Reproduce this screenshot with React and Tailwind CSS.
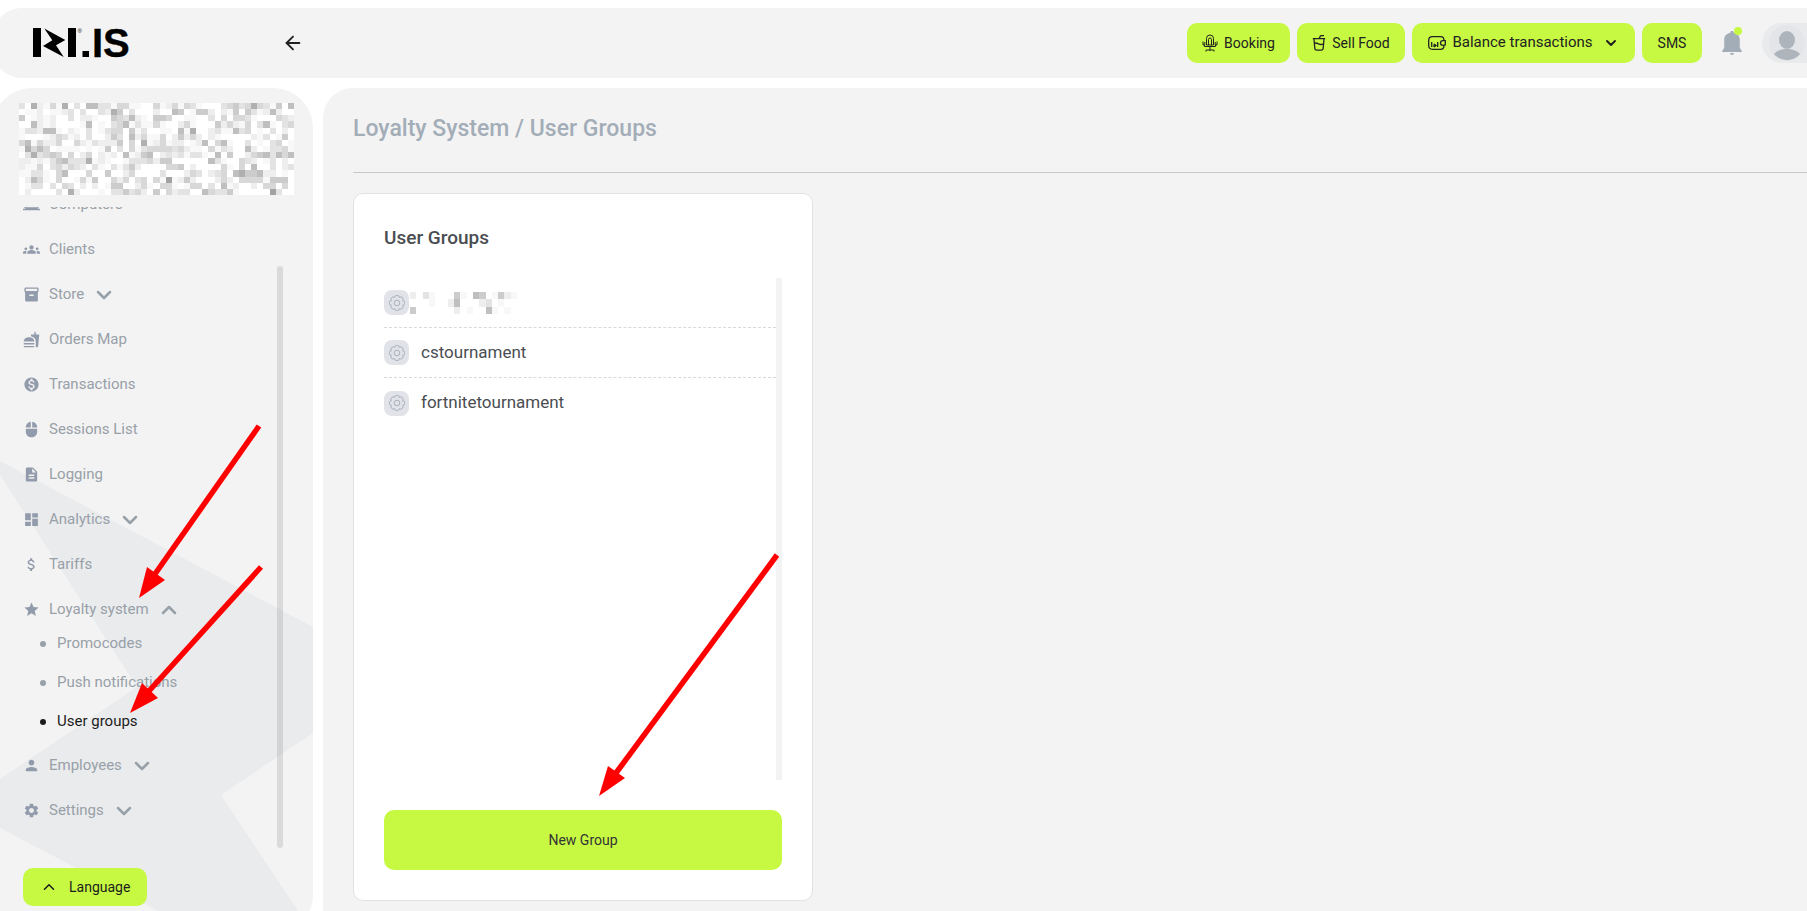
import React from 'react'
import { ArrowLeft, ChevronDown, ChevronUp } from 'lucide-react'
import {
  MdGroups,
  MdInventory2,
  MdFastfood,
  MdMonetizationOn,
  MdMouse,
  MdDescription,
  MdDashboard,
  MdAttachMoney,
  MdStar,
  MdPerson,
  MdSettings,
  MdComputer,
} from 'react-icons/md'

const SHADES = ['#ffffff', '#f8f8f8', '#eeeeee', '#e3e3e3', '#d8d8d8', '#cccccc', '#bfbfbf', '#b0b0b0', '#a2a2a2']

const CLUB_MOSAIC = [
  '307214170306633144110041241431000345347431506',
  '011201123030032750300020065015520215053126200',
  '501212003022100543621055400110030404431000432',
  '006212000016010346131141002410005242140361034',
  '133266102103013440513001106170023116340103020',
  '100012431203002530624114025242021000002130150',
  '461422400421322250407124122012604610030103401',
  '174640111101015030413444434211041320062013341',
  '037345404024021206125602323133106050024563646',
  '221213563337121001333425500000063100432013020',
  '211403424320310313520000445020000410406003023',
  '113310460004005002400003000243023406755622010',
  '026410400141500424034041812520002420444415550',
  '013303043020201550024104410144030612002044040',
  '020000307200010335342050423300643351000008300',
]

const NAME_MOSAIC = ['20310005106501521', '00010026000230100', '50000002010061010']

const NAV = [
  { label: 'Computers', icon: MdComputer },
  { label: 'Clients', icon: MdGroups },
  { label: 'Store', icon: MdInventory2, chevron: 'down' },
  { label: 'Orders Map', icon: MdFastfood },
  { label: 'Transactions', icon: MdMonetizationOn },
  { label: 'Sessions List', icon: MdMouse },
  { label: 'Logging', icon: MdDescription },
  { label: 'Analytics', icon: MdDashboard, chevron: 'down' },
  { label: 'Tariffs', icon: MdAttachMoney },
  {
    label: 'Loyalty system',
    icon: MdStar,
    chevron: 'up',
    children: ['Promocodes', 'Push notifications', 'User groups'],
  },
  { label: 'Employees', icon: MdPerson, chevron: 'down' },
  { label: 'Settings', icon: MdSettings, chevron: 'down' },
]

const ARROWS = [
  { from: [259, 426], to: [155, 574], head: '139,598 147,567 165,580' },
  { from: [261, 567], to: [149, 691], head: '130,713 142,683 158,698' },
  { from: [777, 555], to: [616, 773], head: '599,796 608,766 625,778' },
]

function Mosaic({ rows, className }) {
  return (
    <svg
      className={className}
      viewBox={`0 0 ${rows[0].length} ${rows.length}`}
      preserveAspectRatio="none"
      shapeRendering="crispEdges"
      aria-hidden="true"
    >
      {rows.map((row, y) =>
        row.split('').map((c, x) => (
          <rect key={`${x}-${y}`} x={x} y={y} width="1" height="1" fill={SHADES[c]} />
        ))
      )}
    </svg>
  )
}

function Logo() {
  return (
    <svg className="w-[108px] h-12" viewBox="32 19 108 48" role="img" aria-label="IZI.IS">
      <rect x="33" y="28" width="8" height="29" />
      <polygon points="44.3,28.5 65.3,40 56,45.3 63.7,57 43,46 52.3,40.3" />
      <rect x="68" y="28" width="8" height="29" />
      <rect x="82.5" y="51" width="6.5" height="6" />
      <text x="77.5" y="33" fontSize="6" fontFamily="Liberation Sans, sans-serif">®</text>
      <text x="92" y="57" fontSize="40" fontWeight="700" stroke="#000000" strokeWidth="0.4" fontFamily="Liberation Sans, sans-serif">IS</text>
    </svg>
  )
}

function MicIcon() {
  return (
    <svg className="w-4 h-[18px]" viewBox="0 0 16 18" fill="none" stroke="currentColor" strokeWidth="1">
      <path d="M4.500 11V4.500a3.500 3.500 0 0 1 7 0V11z" />
      <path d="M6.500 11V5.500a1.500 1.500 0 0 1 3 0V11" />
      <path d="M1 7.500v3.500h1.500v1.500h11V11H15V7.500M2.800 8v3M13.200 8v3M8 12.500V17M4 17.500v-1.500h8v1.500" />
    </svg>
  )
}

function CupIcon() {
  return (
    <svg className="w-[14px] h-4" viewBox="0 0 14 16" fill="none" stroke="currentColor" strokeWidth="1.3">
      <path d="M.8 3.7h12.4M2 4l.8 9.4a2 2 0 0 0 2 1.8h4.4a2 2 0 0 0 2-1.8L12 4M2.5 8.3c2-1 3 .2 4.5.8s3 .5 4.6-.4M7.3 3.5 8 1.6q.3-.9 1.3-.9H12" />
    </svg>
  )
}

function WalletIcon() {
  return (
    <svg className="w-[18px] h-[14px]" viewBox="0 0 18 14" fill="none" stroke="currentColor" strokeWidth="1.3">
      <path d="M16 4.5c0-2.5-1-3.8-3.5-3.8h-8C2 .7.7 2 .7 4.3v5.4C.7 12 2 13.3 4.5 13.3h8c2.500 0 3.500-1.300 3.500-3.600" />
      <path d="M17.300 4.700h-2.500a2.200 2.200 0 0 0 0 4.600l2.500-.3z" />
      <path d="M3.700 6v5M6 8.500V11M6 8l2 1.500L6 11M9.700 6v5" />
    </svg>
  )
}

// outline of a gear with eight round teeth
function gearPath() {
  const pts = Array.from({ length: 8 }, (_, i) => {
    const a = (Math.PI / 4) * i + Math.PI / 8
    return `${(8 + 6 * Math.cos(a)).toFixed(2)} ${(8 + 6 * Math.sin(a)).toFixed(2)}`
  })
  return `M${pts[7]}` + pts.map((p) => `A2.3 2.3 0 0 1 ${p}`).join('') + 'Z'
}

function GearIcon() {
  return (
    <svg className="w-4 h-4" viewBox="0 0 16 16" fill="none" stroke="currentColor" strokeWidth="1">
      <path d={gearPath()} />
      <circle cx="8" cy="8" r="2.8" />
    </svg>
  )
}

function BellButton() {
  return (
    <button aria-label="Notifications" className="relative ml-5 text-[#a3adb8]">
      <svg className="w-5 h-6" viewBox="0 0 20 24" fill="currentColor">
        <path d="M10 0c1.200 0 1.800.7 1.800 1.700 3.900.8 6 3.500 6 7v8.100L19.800 20v1H.2v-1l2-3.200V8.700c0-3.500 2.100-6.200 6-7C8.200.7 8.800 0 10 0zM8 22h4c0 1.300-.9 2-2 2s-2-.7-2-2z" />
      </svg>
      <span className="absolute -top-1 right-0 w-2 h-2 rounded-full bg-[#c7f943]" />
    </button>
  )
}

function Header() {
  return (
    <header className="-ml-2 h-[70px] shrink-0 bg-[#f3f3f3] rounded-l-[30px] flex items-center pl-10 overflow-hidden">
      <div className="w-[250px] shrink-0 flex items-center">
        <Logo />
      </div>
      <button aria-label="Collapse menu" className="text-[#222222]">
        <ArrowLeft className="w-[22px] h-[22px]" />
      </button>
      <div className="ml-auto flex items-center gap-[7px] text-sm text-[#222222]">
        <button className="w-[103px] h-10 rounded-[10px] bg-[#c7f943] flex items-center justify-center gap-1.5">
          <MicIcon />
          Booking
        </button>
        <button className="w-[108px] h-10 rounded-[10px] bg-[#c7f943] flex items-center justify-center gap-1.5">
          <CupIcon />
          Sell Food
        </button>
        <button className="w-[223px] h-10 rounded-[10px] bg-[#c7f943] flex items-center justify-center gap-1.5 text-[15px]">
          <WalletIcon />
          Balance transactions
          <ChevronDown className="w-4 h-4 ml-1" strokeWidth={3} />
        </button>
        <button className="w-[60px] h-10 rounded-[10px] bg-[#c7f943]">SMS</button>
      </div>
      <BellButton />
      <button aria-label="Profile" className="ml-5 w-[45px] h-10 shrink-0 rounded-l-full bg-[#e8eaec] flex items-center pl-[7px]">
        <svg className="w-9 h-9" viewBox="0 0 36 36" fill="#adb4bb">
          <circle cx="18" cy="18" r="18" fill="#e3e5e8" />
          <ellipse cx="18" cy="15" rx="8" ry="9" />
          <path d="M5 29c3-3.500 8-5 13-5s10 1.500 13 5c-3 3.800-8 6-13 6s-10-2.200-13-6z" />
        </svg>
      </button>
    </header>
  )
}

function NavItem({ item }) {
  const Icon = item.icon
  const Chevron = item.chevron === 'up' ? ChevronUp : ChevronDown
  return (
    <li>
      <a href="#" className="h-[45px] flex items-center">
        <Icon className="w-[17px] h-[17px] mr-[9px] text-[#929bab]" />
        {item.label}
        {item.chevron && <Chevron className="w-6 h-6 ml-2" strokeWidth={2.5} />}
      </a>
      {item.children && (
        <ul className="-mt-2 mb-0.5 pl-[17px]">
          {item.children.map((label) => (
            <li key={label}>
              <a
                href="#"
                className={
                  label === 'User groups'
                    ? 'h-[39px] flex items-center gap-[11px] text-[#1c1c1c]'
                    : 'h-[39px] flex items-center gap-[11px]'
                }
              >
                <span className="w-1.5 h-1.5 rounded-full bg-current" />
                {label}
              </a>
            </li>
          ))}
        </ul>
      )}
    </li>
  )
}

function Sidebar() {
  return (
    <aside className="relative -ml-2 -mb-6 w-[321px] shrink-0 bg-[#f3f3f3] rounded-[40px] overflow-hidden pt-[15px] pl-[27px] pr-5">
      <svg className="absolute top-0 left-2 w-[313px] h-[847px]" viewBox="0 88 313 847" fill="#e9ebed" aria-hidden="true">
        <polygon points="-10,456 0,461 313,627 313,733 221,795 314,935 204,935 0,828 -10,823 -10,786 0,779 137,687 0,475" />
      </svg>
      <div className="relative">
        <Mosaic rows={CLUB_MOSAIC} className="block w-[275px] h-[92px]" />
        <div className="mt-3 ml-1 mr-2.5 h-[641px] flex justify-between overflow-hidden">
          <nav className="-mt-[25px] text-[15px] text-[#98a0a8]">
            <ul>
              {NAV.map((item) => (
                <NavItem key={item.label} item={item} />
              ))}
            </ul>
          </nav>
          <div className="mt-[59px] w-1.5 rounded-full bg-black/10" />
        </div>
        <button className="mt-5 ml-1 w-[124px] h-[38px] rounded-[10px] bg-[#c7f943] flex items-center pl-[17px] gap-[11px] text-sm text-[#1c1c1c]">
          <ChevronUp className="w-[18px] h-[18px]" strokeWidth={2} />
          Language
        </button>
      </div>
    </aside>
  )
}

function GroupRow({ children, last }) {
  return (
    <li className={last ? 'h-[50px] flex items-center' : 'h-[50px] flex items-center border-b border-dashed border-[#d9d9d9]'}>
      <button aria-label="Group settings" className="w-[25px] h-[25px] rounded-lg bg-[#e1e3e9] text-[#a9b1bb] flex items-center justify-center">
        <GearIcon />
      </button>
      {children}
    </li>
  )
}

function UserGroupsCard() {
  return (
    <section className="mt-5 w-[460px] rounded-[10px] border border-[#e0e2e6] bg-white p-[30px]">
      <h2 className="text-[19px] leading-7 font-medium text-[#4a4d52]">User Groups</h2>
      <div className="mt-[26px] h-[502px] flex">
        <ul className="grow text-[17px] text-[#4a4d52]">
          <GroupRow>
            <Mosaic rows={NAME_MOSAIC} className="ml-px w-[107px] h-[22px]" />
          </GroupRow>
          <GroupRow>
            <span className="ml-3">cstournament</span>
          </GroupRow>
          <GroupRow last>
            <span className="ml-3">fortnitetournament</span>
          </GroupRow>
        </ul>
        <div className="w-1.5 bg-[#f3f3f3]" />
      </div>
      <button className="mt-[30px] w-full h-[60px] rounded-[10px] bg-[#c7f943] text-sm text-[#333333]">
        New Group
      </button>
    </section>
  )
}

export default function App() {
  return (
    <div className="relative h-screen overflow-hidden bg-white pt-2 flex flex-col gap-2.5 font-['Roboto',sans-serif]">
      <Header />
      <div className="grow flex gap-2.5">
        <Sidebar />
        <main className="grow bg-[#f3f3f3] rounded-tl-[30px] pl-[30px]">
          <h1 className="pt-[25px] pb-[27px] text-[23px] leading-8 font-medium text-[#a3adb8] border-b border-[#c8c8c8]">
            Loyalty System / User Groups
          </h1>
          <UserGroupsCard />
        </main>
      </div>
      <svg className="absolute top-0 left-0 w-[820px] h-[820px] pointer-events-none" viewBox="0 0 820 820" aria-hidden="true">
        {ARROWS.map(({ from, to, head }) => (
          <g key={head} fill="#ff0000" stroke="#ff0000">
            <line x1={from[0]} y1={from[1]} x2={to[0]} y2={to[1]} strokeWidth="5.5" />
            <polygon points={head} stroke="none" />
          </g>
        ))}
      </svg>
    </div>
  )
}
